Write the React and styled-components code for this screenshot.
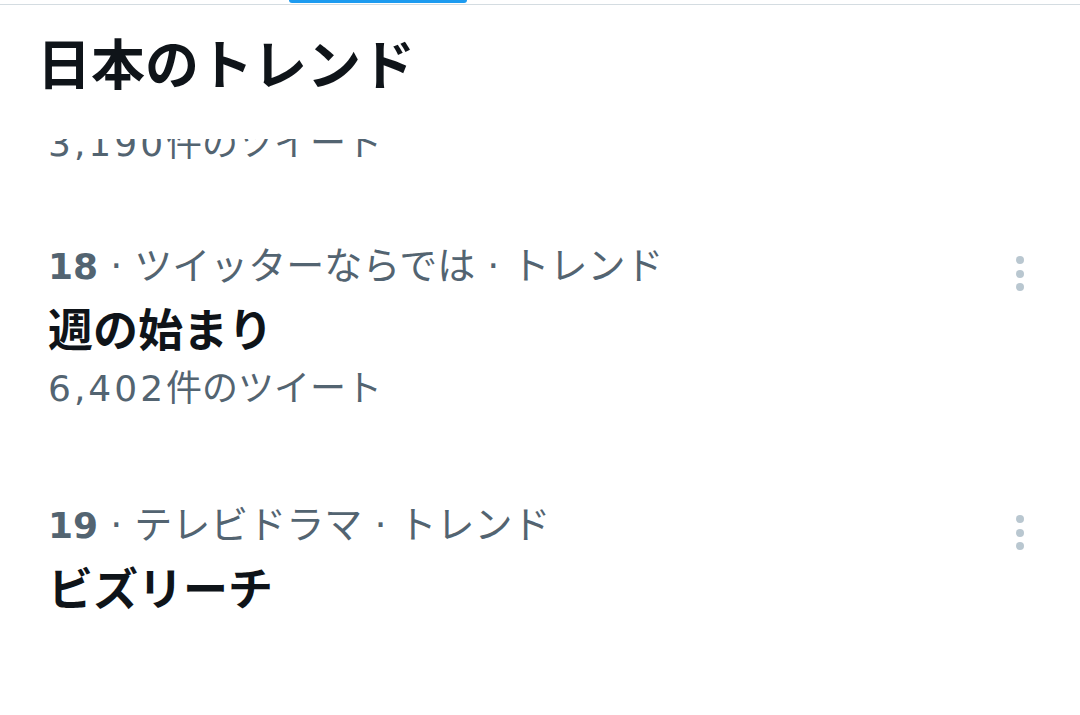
import React from 'react';
import styled, { createGlobalStyle } from 'styled-components';

const GlobalStyle = createGlobalStyle`
  body {
    margin: 0;
    background: #ffffff;
    font-family: "Noto Sans CJK JP", "Noto Sans", sans-serif;
  }
`;

const Screen = styled.div`
  width: 1080px;
  height: 715px;
  overflow: hidden;
  background: #ffffff;
`;

const TabStrip = styled.div`
  height: 4px;
  border-bottom: 1px solid #d4dce1;
  display: flex;
`;

const TabIndicator = styled.div`
  margin-left: 289px;
  width: 178px;
  height: 3px;
  border-radius: 0 0 3px 3px;
  background: #1d9bf0;
`;

const Header = styled.div`
  height: 134px;
  box-sizing: border-box;
  padding: 25px 0 0 37px;
  background: #ffffff;
`;

const Title = styled.h1`
  margin: 0;
  font-family: "Noto Sans CJK JP", sans-serif;
  font-size: 54px;
  line-height: 64px;
  font-weight: 700;
  color: #0f1419;
`;

const ClippedRow = styled.div`
  height: 35px;
  overflow: hidden;
  display: flex;
  align-items: flex-end;
  padding-left: 48px;
`;

const TrendList = styled.div`
  display: flex;
  flex-direction: column;
`;

const TrendItem = styled.div`
  display: flex;
  align-items: flex-start;
  padding: 62px 56px 14px 48px;
`;

const TrendBody = styled.div`
  flex: 1;
  display: flex;
  flex-direction: column;
`;

const Meta = styled.div`
  font-family: "DejaVu Sans", "Noto Sans CJK JP", sans-serif;
  font-size: 38px;
  line-height: 60px;
  color: #536471;
  white-space: nowrap;
`;

const Rank = styled.span`
  font-size: 36px;
  font-weight: 700;
`;

const TrendName = styled.div`
  font-family: "Noto Sans CJK JP", sans-serif;
  font-size: 45px;
  line-height: 62px;
  font-weight: 700;
  color: #0f1419;
`;

const Count = styled.div`
  font-family: "DejaVu Sans", "Noto Sans CJK JP", sans-serif;
  font-size: 36px;
  line-height: 60px;
  color: #536471;
  white-space: nowrap;
`;

const Num = styled.span`
  letter-spacing: 3px;
`;

const MoreButton = styled.div`
  display: flex;
  flex-direction: column;
  gap: 5.5px;
  margin-top: 20px;
`;

const Dot = styled.span`
  width: 8px;
  height: 8px;
  border-radius: 50%;
  background: #b9c7d0;
`;

const trends = [
  { rank: 18, category: 'ツイッターならでは · トレンド', name: '週の始まり', count: '6,402' },
  { rank: 19, category: 'テレビドラマ · トレンド', name: 'ビズリーチ' },
];

function TweetCount({ value }) {
  return (
    <Count>
      <Num>{value}</Num>件のツイート
    </Count>
  );
}

function App() {
  return (
    <Screen>
      <GlobalStyle />
      <TabStrip>
        <TabIndicator />
      </TabStrip>
      <Header>
        <Title>日本のトレンド</Title>
      </Header>
      <ClippedRow>
        <TweetCount value="3,190" />
      </ClippedRow>
      <TrendList>
        {trends.map((t) => (
          <TrendItem key={t.rank}>
            <TrendBody>
              <Meta>
                <Rank>{t.rank}</Rank> · {t.category}
              </Meta>
              <TrendName>{t.name}</TrendName>
              {t.count && <TweetCount value={t.count} />}
            </TrendBody>
            <MoreButton>
              <Dot />
              <Dot />
              <Dot />
            </MoreButton>
          </TrendItem>
        ))}
      </TrendList>
    </Screen>
  );
}

export default App;
